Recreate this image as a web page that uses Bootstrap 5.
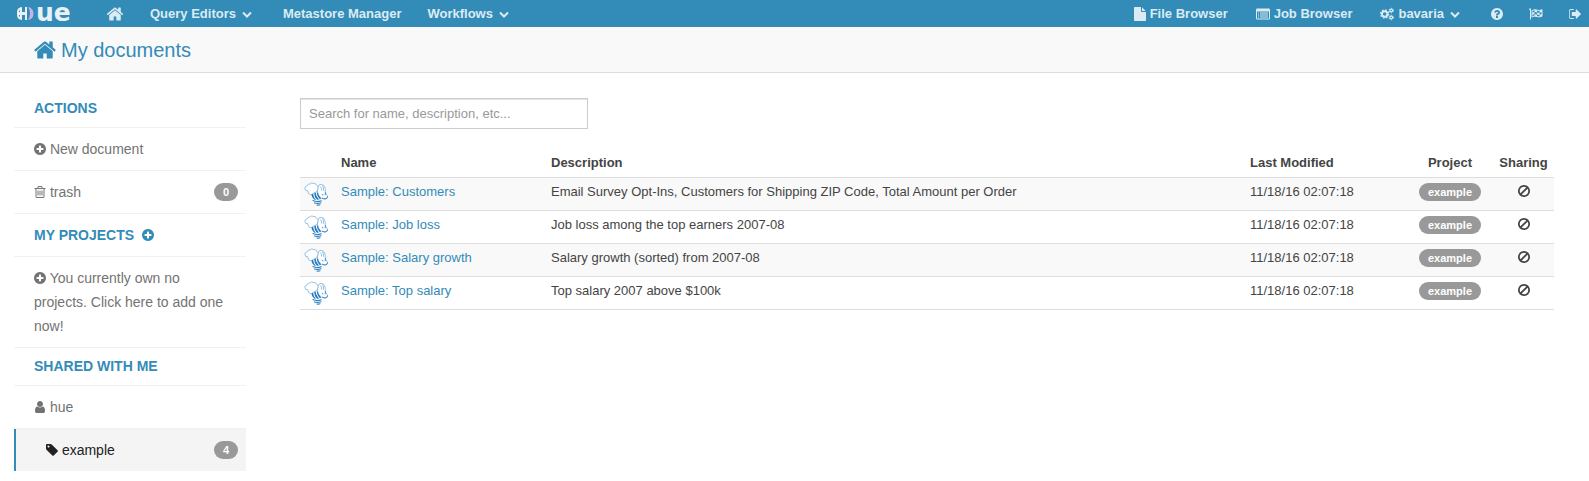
<!DOCTYPE html>
<html lang="en">
<head>
<meta charset="utf-8">
<meta name="viewport" content="width=device-width, initial-scale=1">
<title>Hue - My documents</title>
<link href="https://cdn.jsdelivr.net/npm/bootstrap@5.3.0/dist/css/bootstrap.min.css" rel="stylesheet">
<style>
:root { --hue-blue: #338bb8; --hue-light: #dbebf3; --hue-gray: #737373; }
body { font-family: "Liberation Sans", Arial, sans-serif; font-size: 13px; line-height: 18px; color: #444; background: #fff; }
a { text-decoration: none; }
.ico { width: 14px; height: 14px; fill: currentColor; flex-shrink: 0; }
.ico-inline { vertical-align: -2px; }
.ico-12 { width: 12px; }
.ico-18 { width: 18px; height: 18px; }
.ico-24 { width: 24px; height: 24px; }
.chev { width: 10px; height: 14px; fill: none; stroke: currentColor; stroke-width: 2; margin-left: 2px; }

.topbar { background: var(--hue-blue); height: 27px; padding: 0 8px 0 16px; }
.topbar .nav-link { color: var(--hue-light); font-weight: 700; padding: 0 13px; height: 27px; gap: 4px; display: flex; align-items: center; white-space: nowrap; }
.topbar .nav-link.app-link { padding: 0 14px; }
.topbar .nav-link.has-menu { padding-right: 18px; }
.topbar .nav-link:hover { color: #fff; }
.brand { color: #e8f1f6; font: 700 25px/24px "DejaVu Sans", sans-serif; height: 27px; width: 77px; padding-bottom: 1px; }

.titlebar { background: #f9f9f9; border-bottom: 1px solid #ddd; height: 46px; padding-left: 33px; color: var(--hue-blue); }
.titlebar h1 { font-size: 20px; line-height: 24px; font-weight: 400; }

.layout { padding: 17px 35px 10px 14px; gap: 54px; }
.side { width: 232px; flex-shrink: 0; font-size: 14px; line-height: 24px; }
.side li { border-bottom: 1px solid #f1f1f1; }
.side li > a, .side .side-head { display: flex; align-items: center; padding: 9px 8px 9px 20px; color: var(--hue-gray); }
.side li > a.d-block { padding-right: 18px; }
.side .side-head { color: var(--hue-blue); font-weight: 700; }
.side .side-head.short { padding-top: 6px; padding-bottom: 7px; }
.side li.picked { background: #f4f4f4; border-left: 2px solid var(--hue-blue); border-bottom: 0; }
.side li.picked > a { color: #222; padding-left: 30px; }
.pill { background: #999; color: #fff; font-size: 11px; line-height: 14px; font-weight: 700; padding: 2px 9px; border-radius: 9px; display: inline-block; }

.search { width: 288px; height: 31px; font-size: 13px; border: 1px solid #ccc; border-radius: 0; padding: 4px 8px; box-shadow: inset 0 1px 1px rgba(0,0,0,.1); }
.search::placeholder { color: #999; }
.docs { table-layout: fixed; border-collapse: collapse; margin-top: 20px; width: 100%; }
.docs th, .docs td { padding: 5px 8px 4px; vertical-align: top; border-bottom: 1px solid #ddd; }
.docs th { padding-bottom: 5px; }
.docs td.cell-ico { padding: 4px; }
.docs td a { color: var(--hue-blue); }
.docs tbody tr:nth-child(odd) { background: #f9f9f9; }
.docs .bee { width: 24px; height: 24px; display: block; }
.w-ico { width: 33px; } .w-name { width: 210px; } .w-mod { width: 165px; } .w-proj { width: 86px; } .w-share { width: 61px; }
.docs .cell-share { padding-left: 0; padding-right: 0; text-align: center; }
</style>
</head>
<body>

<svg class="d-none" xmlns="http://www.w3.org/2000/svg">
  <symbol id="i-home" viewBox="0 0 1792 1792"><path d="M1472 992v480q0 26-19 45t-45 19h-384v-384h-256v384h-384q-26 0-45-19t-19-45v-480q0-1 .5-3t.5-3l575-474 575 474q1 2 1 6zm223-69l-62 74q-8 9-21 11h-3q-13 0-21-7l-692-577-692 577q-12 8-24 7-13-2-21-11l-62-74q-8-10-7-23.5t11-21.5l719-599q32-26 76-26t76 26l244 204v-195q0-14 9-23t23-9h192q14 0 23 9t9 23v408l219 182q10 8 11 21.5t-7 23.5z"/></symbol>
  <symbol id="i-plus" viewBox="128 0 1536 1792"><path d="M1344 960v-128q0-26-19-45t-45-19h-256v-256q0-26-19-45t-45-19h-128q-26 0-45 19t-19 45v256h-256q-26 0-45 19t-19 45v128q0 26 19 45t45 19h256v256q0 26 19 45t45 19h128q26 0 45-19t19-45v-256h256q26 0 45-19t19-45zm320-64q0 209-103 385.5t-279.5 279.5-385.5 103-385.5-103-279.5-279.5-103-385.5 103-385.5 279.5-279.5 385.5-103 385.5 103 279.5 279.5 103 385.5z"/></symbol>
  <symbol id="i-help" viewBox="128 0 1536 1792"><path d="M1024 1376v-192q0-14-9-23t-23-9h-192q-14 0-23 9t-9 23v192q0 14 9 23t23 9h192q14 0 23-9t9-23zm256-672q0-88-55.5-163t-138.5-116-170-41q-243 0-371 213-15 24 8 42l132 100q7 6 19 6 16 0 25-12 53-68 86-92 34-24 86-24 48 0 85.5 26t37.5 59q0 38-20 61t-68 45q-63 28-115.5 86.5t-52.5 125.5v36q0 14 9 23t23 9h192q14 0 23-9t9-23q0-19 21.5-49.5t54.5-49.5q32-18 49-28.5t46-35 44.5-48 28-60.5 12.5-81zm384 192q0 209-103 385.5t-279.5 279.5-385.5 103-385.5-103-279.5-279.5-103-385.5 103-385.5 279.5-279.5 385.5-103 385.5 103 279.5 279.5 103 385.5z"/></symbol>
  <symbol id="i-trash" viewBox="192 0 1408 1792"><path d="M704 736v576q0 14-9 23t-23 9h-64q-14 0-23-9t-9-23v-576q0-14 9-23t23-9h64q14 0 23 9t9 23zm256 0v576q0 14-9 23t-23 9h-64q-14 0-23-9t-9-23v-576q0-14 9-23t23-9h64q14 0 23 9t9 23zm256 0v576q0 14-9 23t-23 9h-64q-14 0-23-9t-9-23v-576q0-14 9-23t23-9h64q14 0 23 9t9 23zm128 724v-948h-896v948q0 22 7 40.5t14.5 27 10.5 8.5h832q3 0 10.5-8.5t14.5-27 7-40.5zm-672-1076h448l-48-117q-7-9-17-11h-317q-10 2-17 11zm928 32v64q0 14-9 23t-23 9h-96v948q0 83-47 143.5t-113 60.5h-832q-66 0-113-58.5t-47-141.5v-952h-96q-14 0-23-9t-9-23v-64q0-14 9-23t23-9h309l70-167q15-37 54-63t79-26h320q40 0 79 26t54 63l70 167h309q14 0 23 9t9 23z"/></symbol>
  <symbol id="i-user" viewBox="192 0 1408 1792"><path d="M1536 1399q0 109-62.500 187t-150.500 78h-854q-88 0-150.500-78t-62.500-187q0-85 8.500-160.500t31.500-152 58.500-131 94-89 134.500-34.500q131 128 313 128t313-128q76 0 134.500 34.500t94 89 58.500 131 31.500 152 8.500 160.500zm-256-887q0 159-112.500 271.500t-271.500 112.500-271.500-112.500-112.500-271.500 112.500-271.500 271.500-112.500 271.500 112.500 112.500 271.500z"/></symbol>
  <symbol id="i-tag" viewBox="128 0 1536 1792"><path d="M576 448q0-53-37.500-90.500t-90.500-37.500-90.500 37.500-37.500 90.500 37.500 90.500 90.500 37.500 90.500-37.500 37.500-90.500zm1067 576q0 53-37 90l-491 492q-39 37-91 37-53 0-90-37l-715-716q-38-37-64.500-101t-26.500-117v-416q0-52 38-90t90-38h416q53 0 117 26.500t102 64.500l715 714q37 39 37 91z"/></symbol>
  <symbol id="i-file" viewBox="128 0 1536 1792"><path d="M1152 512v-472q22 14 36 28l408 408q14 14 28 36h-472zm-128 32q0 40 28 68t68 28h544v1056q0 40-28 68t-68 28h-1344q-40 0-68-28t-28-68v-1600q0-40 28-68t68-28h800v544z"/></symbol>
  <symbol id="i-list" viewBox="0 0 14 14"><path fill-rule="evenodd" d="M1.200 1.500h11.600q1.200 0 1.200 1.200v8.600q0 1.200-1.200 1.200H1.200Q0 12.500 0 11.300V2.700Q0 1.500 1.200 1.500zM1 4.500v6.700q0 .3.300.3h11.400q.3 0 .3-.3V4.500z"/><path d="M2 5.500h1v1H2zm2 0h8v1H4zM2 7.500h1v1H2zm2 0h8v1H4zM2 9.500h1v1H2zm2 0h8v1H4z"/></symbol>
  <symbol id="i-cogs" viewBox="0 0 15 14"><g fill="none" stroke="currentColor"><circle cx="5" cy="7" r="2.900" stroke-width="2"/><circle cx="5" cy="7" r="4.300" stroke-width="1.500" stroke-dasharray="1.700 1.677"/><circle cx="12" cy="3.300" r="1.500" stroke-width="1.300"/><circle cx="12" cy="3.300" r="2.400" stroke-width="1" stroke-dasharray="1.200 1.313"/><circle cx="12" cy="10.700" r="1.500" stroke-width="1.300"/><circle cx="12" cy="10.700" r="2.400" stroke-width="1" stroke-dasharray="1.200 1.313"/></g></symbol>
  <symbol id="i-flag" viewBox="0 0 14 14"><path d="M.5 1.600a1 1 0 0 1 1.500.8v10.100H1V3.200a1 1 0 0 1-.5-1.600z"/><path fill="none" stroke="currentColor" d="M3 3.600q2.700-1.700 5-.5 2.300 1.200 5-.4v6.400q-2.700 1.500-5 .4-2.300-1.200-5 .5z"/><path d="M5.500 2.800 8 3.200v2.200L5.500 5zM3.200 5.900q1.200-.8 2.300-.8v2.200q-1.100 0-2.300.8zM8 5.400q1.200.4 2.500.3v2.200Q9.200 8 8 7.500zM10.500 3.600l2.400-.8v2.200l-2.400.8zM5.500 7.300 8 7.600v2.200l-2.500-.6zM10.500 7.800l2.400-.8v2.200l-2.400.8z"/></symbol>
  <symbol id="i-out" viewBox="96 0 1536 1792"><path d="M704 1440q0 4 1 20t.5 26.500-3 23.500-10 19.500-20.500 6.500h-320q-119 0-203.500-84.500t-84.500-203.500v-704q0-119 84.500-203.500t203.500-84.500h320q13 0 22.500 9.500t9.500 22.500q0 4 1 20t.5 26.500-3 23.500-10 19.500-20.500 6.500h-320q-66 0-113 47t-47 113v704q0 66 47 113t113 47h312l11.500 1 11.500 3 8 5.500 7 9 2 13.500zm928-544q0 26-19 45l-544 544q-19 19-45 19t-45-19-19-45v-288h-448q-26 0-45-19t-19-45v-384q0-26 19-45t45-19h448v-288q0-26 19-45t45-19 45 19l544 544q19 19 19 45z"/></symbol>
  <symbol id="i-ban" viewBox="128 0 1536 1792"><path d="M1440 893q0-161-87-295l-754 753q137 89 297 89 111 0 211.500-43.500t173.500-116.500 116-174.500 43-212.500zm-999 299l755-754q-135-91-300-91-148 0-273 73t-198 199-73 274q0 162 89 299zm1223-299q0 157-61 300t-163.500 246-245 164-298.500 61-298.500-61-245-164-163.500-246-61-300 61-299.500 163.500-245.500 245-164 298.500-61 298.500 61 245 164 163.500 245.500 61 299.500z"/></symbol>
  <symbol id="i-chev" viewBox="0 0 10 14"><path d="M1 5.500l4 4 4-4"/></symbol>
  <symbol id="i-bee" viewBox="0 0 24 24">
    <g fill="#fff" stroke="#7db1da" stroke-width=".8" stroke-linejoin="round">
      <path d="M14 5q.6-2.800 3-2.600 3 .2 3.800 3 .8 2.300.4 5.200l2.700 4.400q-.6 1.900-2.800 1.800l-3.400-.4-3.600-3.400-.6-4z"/>
      <path d="M8 12.500Q6 13 4.500 11.500L3.800 8.800Q1 9 .9 6.500.8 4.400 3 4q.8-2.400 3.300-2.200 1.300-1.600 3.300-.3 2.400-.4 3 1.800 2.200 1 1.300 3.300l-1 3-3.300 1.600z"/>
      <path fill="none" d="M16.500 4.500q1.700 1.500.8 4M18.600 3.600q1.500 2.200.7 5.300"/>
    </g>
    <path fill="#1f77bf" d="M7.500 12.800l1.600-1.300q-.2 3 2.900 6.500l-1.800-.4q-2.700-2-2.700-4.800zM10.200 11.300l1.600-.7q-.3 3.300 3.200 6.800l-2 .4q-2.900-3-2.800-6.500zM12.800 10.600l1.200.2q0 2.500 3 5.600l-1 1q-3.300-3.300-3.200-6.800z"/>
    <g fill="none" stroke="#2f82c6" stroke-linecap="round">
      <path d="M9 18.600q4 1.800 8.300.1M10.500 20.900q3 1 6.500-.2M13 23q1.500.4 3-.2" stroke-width="1.100"/>
      <path d="M21.500 10.700l-.3 2M23.600 14.800q-.3 2-2.400 2.200-1.500 0-2.800-.8M18.200 12.500l.8.400" stroke-width=".9"/>
    </g>
  </symbol>
</svg>

<nav class="topbar d-flex align-items-center">
  <a href="#" class="brand d-flex align-items-center" aria-label="Hue">
    <svg width="20" height="16" viewBox="0 0 20 16" aria-hidden="true">
      <path fill="#e8f1f6" d="M6 2v5h3V2h2v13H9v-5H6v5Q1 14.500 1 10V7Q1 2.500 6 2zM4 5Q3 5.800 3 7h1zM4 12v-2H3q0 1.300 1 2z"/>
      <path fill="#c4b3ea" d="M12 2q5.500 1 5.500 6.500T12 15q2-2.500 2-6.500T12 2z"/>
    </svg><span>ue</span>
  </a>
  <a href="#" class="nav-link" aria-label="Home"><svg class="ico ico-18"><use href="#i-home"/></svg></a>
  <a href="#" class="nav-link has-menu">Query Editors<svg class="chev"><use href="#i-chev"/></svg></a>
  <a href="#" class="nav-link">Metastore Manager</a>
  <a href="#" class="nav-link has-menu">Workflows<svg class="chev"><use href="#i-chev"/></svg></a>
  <div class="d-flex ms-auto">
    <a href="#" class="nav-link app-link"><svg class="ico ico-12"><use href="#i-file"/></svg>File Browser</a>
    <a href="#" class="nav-link app-link"><svg class="ico"><use href="#i-list"/></svg>Job Browser</a>
    <a href="#" class="nav-link app-link has-menu"><svg class="ico"><use href="#i-cogs"/></svg>bavaria<svg class="chev"><use href="#i-chev"/></svg></a>
    <a href="#" class="nav-link" aria-label="Help"><svg class="ico ico-12"><use href="#i-help"/></svg></a>
    <a href="#" class="nav-link" aria-label="Tour"><svg class="ico"><use href="#i-flag"/></svg></a>
    <a href="#" class="nav-link pe-0" aria-label="Sign out"><svg class="ico ico-12"><use href="#i-out"/></svg></a>
  </div>
</nav>

<header class="titlebar d-flex align-items-center">
  <svg class="ico ico-24"><use href="#i-home"/></svg>
  <h1 class="mb-0 ms-1">My documents</h1>
</header>

<div class="layout d-flex align-items-start">
  <ul class="side list-unstyled mb-0">
    <li><div class="side-head short">ACTIONS</div></li>
    <li><a href="#"><span><svg class="ico ico-12 ico-inline"><use href="#i-plus"/></svg> New document</span></a></li>
    <li><a href="#"><span><svg class="ico ico-12 ico-inline"><use href="#i-trash"/></svg> trash</span><span class="pill ms-auto">0</span></a></li>
    <li><div class="side-head">MY PROJECTS<svg class="ico ico-12 ms-2"><use href="#i-plus"/></svg></div></li>
    <li><a href="#" class="d-block"><svg class="ico ico-12 ico-inline"><use href="#i-plus"/></svg> You currently own no projects. Click here to add one now!</a></li>
    <li><div class="side-head short">SHARED WITH ME</div></li>
    <li><a href="#"><span><svg class="ico ico-12 ico-inline"><use href="#i-user"/></svg> hue</span></a></li>
    <li class="picked"><a href="#"><span><svg class="ico ico-12 ico-inline"><use href="#i-tag"/></svg> example</span><span class="pill ms-auto">4</span></a></li>
  </ul>

  <main class="flex-grow-1 pt-2">
    <input type="text" class="search form-control" placeholder="Search for name, description, etc..." aria-label="Search">
    <table class="docs">
      <colgroup><col class="w-ico"><col class="w-name"><col class="w-auto"><col class="w-mod"><col class="w-proj"><col class="w-share"></colgroup>
      <thead>
        <tr><th></th><th>Name</th><th>Description</th><th>Last Modified</th><th class="text-center">Project</th><th class="cell-share">Sharing</th></tr>
      </thead>
      <tbody>
        <tr><td class="cell-ico"><svg class="bee"><use href="#i-bee"/></svg></td><td><a href="#">Sample: Customers</a></td><td>Email Survey Opt-Ins, Customers for Shipping ZIP Code, Total Amount per Order</td><td>11/18/16 02:07:18</td><td class="text-center"><span class="pill">example</span></td><td class="cell-share"><svg class="ico ico-12 ico-inline"><use href="#i-ban"/></svg></td></tr>
        <tr><td class="cell-ico"><svg class="bee"><use href="#i-bee"/></svg></td><td><a href="#">Sample: Job loss</a></td><td>Job loss among the top earners 2007-08</td><td>11/18/16 02:07:18</td><td class="text-center"><span class="pill">example</span></td><td class="cell-share"><svg class="ico ico-12 ico-inline"><use href="#i-ban"/></svg></td></tr>
        <tr><td class="cell-ico"><svg class="bee"><use href="#i-bee"/></svg></td><td><a href="#">Sample: Salary growth</a></td><td>Salary growth (sorted) from 2007-08</td><td>11/18/16 02:07:18</td><td class="text-center"><span class="pill">example</span></td><td class="cell-share"><svg class="ico ico-12 ico-inline"><use href="#i-ban"/></svg></td></tr>
        <tr><td class="cell-ico"><svg class="bee"><use href="#i-bee"/></svg></td><td><a href="#">Sample: Top salary</a></td><td>Top salary 2007 above $100k</td><td>11/18/16 02:07:18</td><td class="text-center"><span class="pill">example</span></td><td class="cell-share"><svg class="ico ico-12 ico-inline"><use href="#i-ban"/></svg></td></tr>
      </tbody>
    </table>
  </main>
</div>

<script src="https://cdn.jsdelivr.net/npm/bootstrap@5.3.0/dist/js/bootstrap.bundle.min.js"></script>
</body>
</html>
